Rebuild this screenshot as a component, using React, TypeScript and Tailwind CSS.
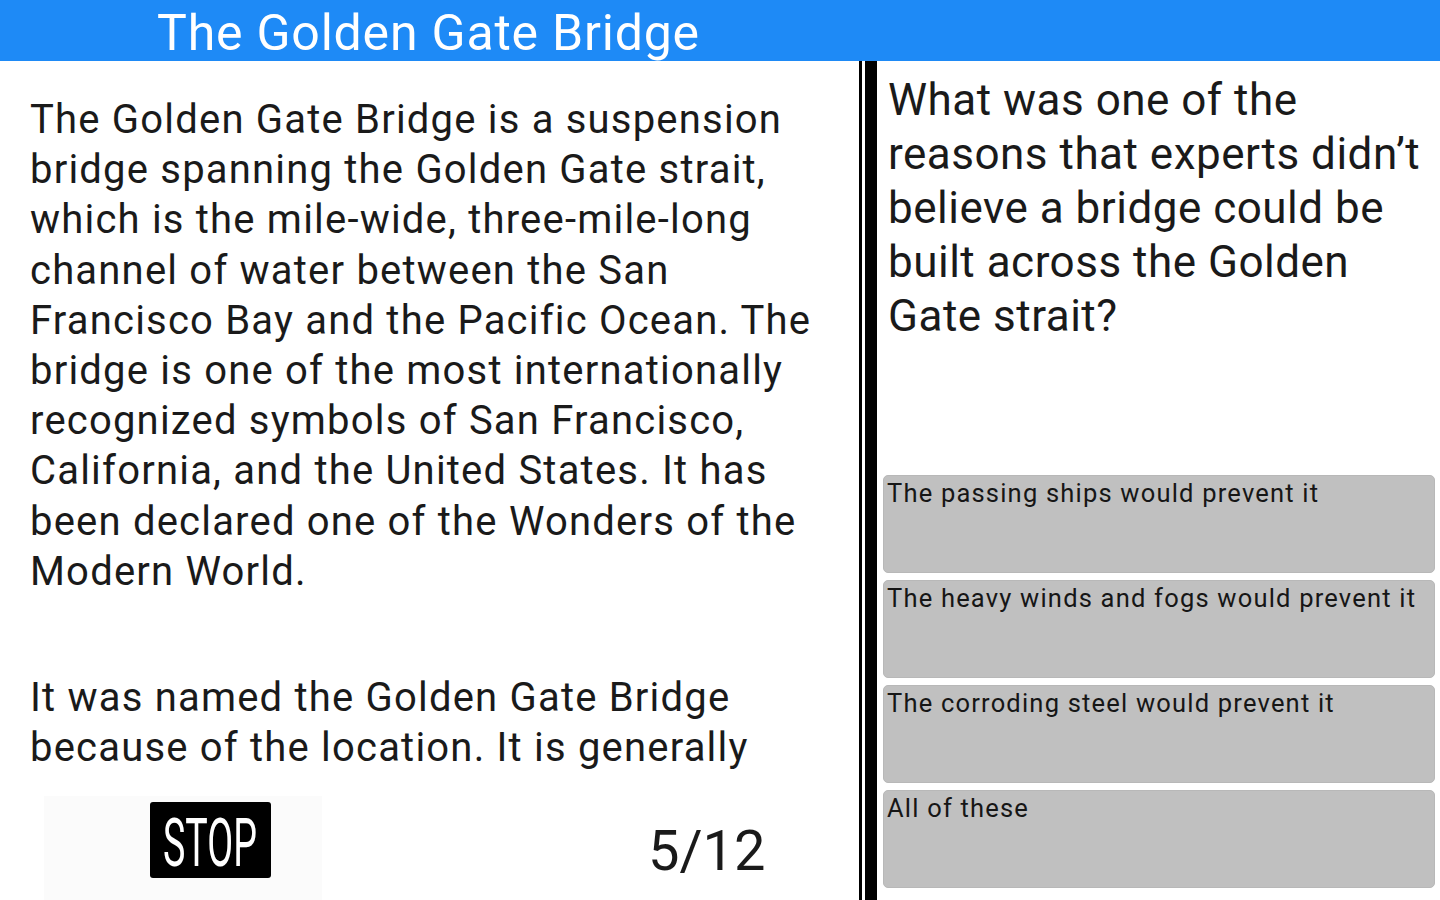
import React from 'react';

const font = { fontFamily: 'Roboto, "Noto Sans", sans-serif' };

const passage1 = [
  'The Golden Gate Bridge is a suspension',
  'bridge spanning the Golden Gate strait,',
  'which is the mile-wide, three-mile-long',
  'channel of water between the San',
  'Francisco Bay and the Pacific Ocean. The',
  'bridge is one of the most internationally',
  'recognized symbols of San Francisco,',
  'California, and the United States. It has',
  'been declared one of the Wonders of the',
  'Modern World.',
];

// only the part that is visible above the footer
const passage2 = [
  'It was named the Golden Gate Bridge',
  'because of the location. It is generally',
];

const options = [
  'The passing ships would prevent it',
  'The heavy winds and fogs would prevent it',
  'The corroding steel would prevent it',
  'All of these',
];

export default function App() {
  return (
    <div className="w-[1440px] h-[900px] flex flex-col overflow-hidden bg-white text-[#1a1a1a]" style={font}>
      {/* Header */}
      <div className="h-[61px] bg-[#1e8af6] flex-shrink-0">
        <h1 className="pl-[157px] text-[50px] leading-[61px] tracking-[0.8px] text-white pt-[3px]">The Golden Gate Bridge</h1>
      </div>

      <div className="flex flex-1 min-h-0">
        {/* Passage */}
        <div className="w-[859px] flex flex-col flex-shrink-0 overflow-hidden">
          <div className="h-[718px] flex-shrink-0 overflow-hidden pl-[30px] pt-[34px] text-[40px] leading-[50.2px] tracking-[1.2px]">
            <p>
              {passage1.map(l => (
                <span key={l} className="block whitespace-nowrap">{l}</span>
              ))}
            </p>
            <p className="mt-[76px]">
              {passage2.map(l => (
                <span key={l} className="block whitespace-nowrap">{l}</span>
              ))}
            </p>
          </div>
          <div className="flex items-start pt-[17px]">
            <div className="ml-[44px] w-[278px] h-[104px] bg-[#fbfbfb] flex items-start pt-[6px] flex-shrink-0">
              <button className="ml-[106px] w-[121px] h-[76px] bg-black rounded-[3px] flex items-center justify-center">
                <svg width="121" height="76" viewBox="0 0 121 76">
                  <text
                    x="13"
                    y="64"
                    textLength="94"
                    lengthAdjust="spacingAndGlyphs"
                    fill="#fff"
                    fontSize="66"
                    fontFamily="Roboto, sans-serif"
                  >
                    STOP
                  </text>
                </svg>
              </button>
            </div>
            <div className="ml-[326px] mt-[27px] text-[56px] leading-none">5/12</div>
          </div>
        </div>

        {/* Divider */}
        <div className="w-[3px] bg-black flex-shrink-0" />
        <div className="w-[3px] bg-white flex-shrink-0" />
        <div className="w-[12px] bg-black flex-shrink-0" />

        {/* Question */}
        <div className="flex-1 flex flex-col pl-[6px] pr-[5px]">
          <div className="h-[414px] pl-[5px] pt-[12px] text-[44px] leading-[54px] tracking-[0.5px]">
            What was one of the
            <br />
            reasons that experts didn’t
            <br />
            believe a bridge could be
            <br />
            built across the Golden
            <br />
            Gate strait?
          </div>
          <div className="flex flex-col gap-[7px]">
            {options.map(o => (
              <div
                key={o}
                className="h-[98px] bg-[#c0c0c0] rounded-[5px] border border-[#b8b8b8] pl-[3px] pt-[2px] text-[25.5px] leading-[30px] tracking-[1.2px] text-[#161616]"
              >
                {o}
              </div>
            ))}
          </div>
        </div>
      </div>
    </div>
  );
}
